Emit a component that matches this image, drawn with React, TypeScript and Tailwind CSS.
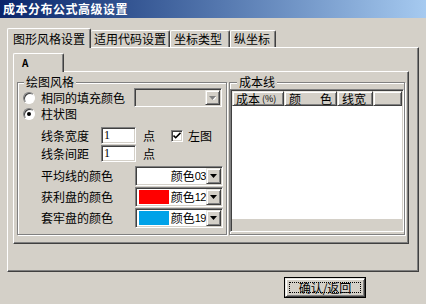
const sunken =
  "border border-t-[#808080] border-l-[#808080] border-r-white border-b-white shadow-[inset_1px_1px_0_#404040,inset_-1px_-1px_0_#d4d0c8]";
const raised =
  "border border-t-[#e8e6e0] border-l-[#e8e6e0] border-r-[#404040] border-b-[#404040] shadow-[inset_1px_1px_0_#fff,inset_-1px_-1px_0_#808080]";
const etched = "border border-[#808080] shadow-[inset_1px_1px_0_#fff,1px_1px_0_#fff]";

function Arrow({ disabled }: { disabled?: boolean }) {
  return (
    <svg width="7" height="4" viewBox="0 0 7 4">
      {disabled && <path d="M1 1h7l-3.5 3.5z" fill="#fff" />}
      <path d="M0 0h7L3.5 4z" fill={disabled ? "#808080" : "#000"} />
    </svg>
  );
}

function ComboButton({ disabled }: { disabled?: boolean }) {
  return (
    <div className={`w-[15px] shrink-0 h-full flex items-center justify-center bg-[#d4d0c8] ${raised}`}>
      <Arrow disabled={disabled} />
    </div>
  );
}

function ColorCombo({ swatch, label, num }: { swatch?: string; label: string; num: string }) {
  return (
    <div className={`w-[88px] h-[20px] flex items-stretch bg-white p-[1px] ${sunken}`}>
      <div className="flex-1 flex items-center justify-end pl-[2px] whitespace-nowrap overflow-hidden">
        {swatch && <div className="h-[14px] w-[30px] shrink-0 mr-auto" style={{ background: swatch }} />}
        <span className="leading-[12px] shrink-0">{label}</span>
        <span className="leading-[12px] shrink-0 text-[11px] tracking-[-0.5px]" style={{ fontFamily: '"Liberation Sans", sans-serif' }}>
          {num}
        </span>
      </div>
      <ComboButton />
    </div>
  );
}

function Radio({ checked }: { checked?: boolean }) {
  return (
    <div className="w-[12px] h-[12px] rounded-full border border-t-[#808080] border-l-[#808080] border-r-white border-b-white bg-white shadow-[inset_1px_1px_0_#404040] flex items-center justify-center">
      {checked && <div className="w-[4px] h-[4px] rounded-full bg-black" />}
    </div>
  );
}

export default function App() {
  return (
    <div
      className="w-[426px] h-[304px] bg-[#d4d0c8] text-[12px] text-black overflow-hidden flex flex-col"
      style={{ fontFamily: '"Noto Sans CJK SC", "Liberation Sans", sans-serif' }}
    >
      {/* title bar */}
      <div className="h-[18px] bg-linear-to-r from-[#0a246a] to-[#a6caf0] flex items-center pl-[3px]">
        <span className="text-white font-bold text-[12px] leading-[18px] tracking-[0.5px]">成本分布公式高级设置</span>
      </div>

      <div className="px-[7px] pt-[10px]">
        {/* tabs */}
        <div className="flex items-end h-[19px]">
          <div className="relative z-10 -mb-px h-[20px] w-[84px] bg-[#d4d0c8] border-l border-t border-white border-r border-r-[#404040] rounded-t-[2px] shadow-[inset_-1px_0_0_#808080] flex items-center pl-[5px] leading-[14px]">
            图形风格设置
          </div>
          <div className="h-[17px] w-[79px] border-t border-white border-r border-r-[#404040] rounded-t-[2px] shadow-[inset_-1px_0_0_#808080] flex items-center pl-[3px] leading-[14px]">
            适用代码设置
          </div>
          <div className="h-[17px] w-[60px] border-l border-t border-white border-r border-r-[#404040] rounded-t-[2px] shadow-[inset_-1px_0_0_#808080] flex items-center pl-[3px] leading-[14px]">
            坐标类型
          </div>
          <div className="h-[17px] w-[46px] border-l border-t border-white border-r border-r-[#404040] rounded-t-[2px] shadow-[inset_-1px_0_0_#808080] flex items-center pl-[3px] leading-[14px]">
            纵坐标
          </div>
        </div>

        {/* outer tab panel */}
        <div className="w-[412px] h-[225px] border-l border-t border-white border-r border-b border-r-[#404040] border-b-[#404040] shadow-[inset_-1px_-1px_0_#808080] pl-[5px] pt-[5px]">
          <div className="flex items-end h-[18px]">
            <div className="relative z-10 -mb-px h-[19px] w-[51px] bg-[#d4d0c8] border-l border-t border-white border-r border-r-[#404040] rounded-t-[2px] shadow-[inset_-1px_0_0_#808080] pl-[8px] pt-[3px] text-[10px] font-bold leading-[12px]">
              A
            </div>
          </div>

          {/* inner panel */}
          <div className="w-[396px] h-[173px] border-l border-t border-white border-r border-b border-r-[#404040] border-b-[#404040] shadow-[inset_-1px_-1px_0_#808080] flex gap-[2px] pl-[3px] pt-[4px]">
            {/* 绘图风格 */}
            <fieldset className={`w-[210px] h-[159px] ${etched}`}>
              <legend className="ml-[6px] px-[2px] leading-[12px] bg-[#d4d0c8]">绘图风格</legend>
              <div className="flex items-center h-[19px] mt-0">
                <div className="ml-[5px]">
                  <Radio />
                </div>
                <span className="ml-[6px] leading-[12px]">相同的填充颜色</span>
                <div className={`ml-auto mr-[4px] w-[88px] h-[19px] flex p-[1px] bg-[#d4d0c8] ${sunken}`}>
                  <div className="flex-1" />
                  <ComboButton disabled />
                </div>
              </div>
              <div className="flex items-center h-[13px] mt-0">
                <div className="ml-[5px]">
                  <Radio checked />
                </div>
                <span className="ml-[6px] leading-[12px]">柱状图</span>
              </div>
              <div className="flex items-center h-[17px] mt-[7px] pl-[23px]">
                <span className="w-[60px] leading-[12px]">线条宽度</span>
                <div className={`w-[35px] h-[17px] bg-white pl-[2px] leading-[14px] ${sunken}`} style={{ fontFamily: '"Liberation Serif", serif' }}>
                  1
                </div>
                <span className="ml-[7px] leading-[12px]">点</span>
                <div className={`ml-[16px] w-[12px] h-[12px] bg-white flex items-center justify-center ${sunken}`}>
                  <svg width="8" height="7" viewBox="0 0 8 7">
                    <path d="M0.5 3.5l2.2 2.2L7.5 0.8" stroke="#000" strokeWidth="1.6" fill="none" />
                  </svg>
                </div>
                <span className="ml-[5px] leading-[12px]">左图</span>
              </div>
              <div className="flex items-center h-[17px] mt-[1px] pl-[23px]">
                <span className="w-[60px] leading-[12px]">线条间距</span>
                <div className={`w-[35px] h-[17px] bg-white pl-[2px] leading-[14px] ${sunken}`} style={{ fontFamily: '"Liberation Serif", serif' }}>
                  1
                </div>
                <span className="ml-[7px] leading-[12px]">点</span>
              </div>
              <div className="flex items-center mt-[4px] pl-[23px]">
                <span className="w-[94px] leading-[12px]">平均线的颜色</span>
                <ColorCombo label="颜色" num="03" />
              </div>
              <div className="flex items-center mt-[1px] pl-[23px]">
                <span className="w-[94px] leading-[12px]">获利盘的颜色</span>
                <ColorCombo swatch="#ff0000" label="颜色" num="12" />
              </div>
              <div className="flex items-center mt-[1px] pl-[23px]">
                <span className="w-[94px] leading-[12px]">套牢盘的颜色</span>
                <ColorCombo swatch="#00a2e8" label="颜色" num="19" />
              </div>
            </fieldset>

            {/* 成本线 */}
            <fieldset className={`w-[176px] h-[159px] ${etched}`}>
              <legend className="ml-[7px] px-[2px] leading-[12px] bg-[#d4d0c8]">成本线</legend>
              <div className={`h-[143px] mt-[1px] flex flex-col bg-white p-[1px] ${sunken}`}>
                <div className="flex h-[15px] bg-[#d4d0c8]">
                  <div className={`w-[52px] flex items-center pl-[3px] leading-[12px] ${raised}`}>
                    成本<span className="text-[9px] ml-[2px]">(%)</span>
                  </div>
                  <div className={`w-[53px] flex items-center justify-between px-[4px] leading-[12px] ${raised}`}>
                    <span>颜</span>
                    <span>色</span>
                  </div>
                  <div className={`w-[36px] flex items-center pl-[4px] leading-[12px] ${raised}`}>线宽</div>
                  <div className={`flex-1 ${raised}`} />
                </div>
                <div className="flex-1 bg-white" />
                <div className="h-[12px] bg-[#d4d0c8] border-t border-white" />
              </div>
            </fieldset>
          </div>
        </div>

        {/* button */}
        <div className="mt-[5px] flex justify-end pr-[53px]">
          <div className="w-[82px] h-[21px] border border-black">
            <div className={`w-full h-full bg-[#d4d0c8] p-[3px] ${raised}`}>
              <div className="w-full h-full border border-dotted border-black flex items-center justify-center leading-[12px]">
                确认/返回
              </div>
            </div>
          </div>
        </div>
      </div>
    </div>
  );
}
